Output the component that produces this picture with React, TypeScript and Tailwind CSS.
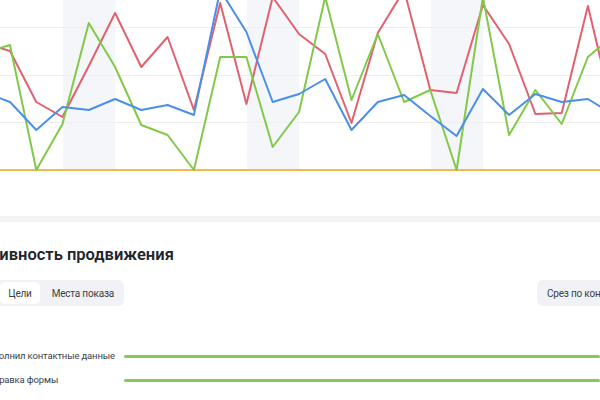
import React from 'react';

const xs = Array.from({ length: 25 }, (_, i) => 10 + 26.27 * (i - 1));

const series = [
  {
    color: '#e0616f',
    data: [43, 51, 102, 117, 66, 13, 67, 37, 110, 3, 104, -3, 34, 54, 123, 33, -10, 90, 93, 5, 44, 114, 113, 6, 116],
  },
  {
    color: '#82c94a',
    data: [53, 45, 170, 124, 23, 67, 125, 135, 170, 57, 57, 147, 112, -3, 100, 34, 102, 90, 170, -3, 135, 90, 124, 57, 35],
  },
  {
    color: '#4a8fe8',
    data: [92, 102, 130, 107, 110, 99, 110, 105, 115, -10, 32, 102, 94, 79, 130, 102, 95, 116, 136, 89, 115, 94, 102, 99, 115],
  },
];

const weekends = [63, 247, 431];
const grid = [27, 75, 122];

function Chart() {
  return (
    <svg width="600" height="172" viewBox="0 0 600 172" className="block">
      {weekends.map((x) => (
        <rect key={x} x={x} y={0} width={52} height={170} fill="#f4f6fa" />
      ))}
      {grid.map((y) => (
        <line key={y} x1={0} x2={600} y1={y + 0.5} y2={y + 0.5} stroke="#efefef" strokeWidth={1} />
      ))}
      <line x1={0} x2={600} y1={170} y2={170} stroke="#f7b84b" strokeWidth={2} />
      {series.map((s) => (
        <polyline
          key={s.color}
          points={s.data.map((y, i) => `${xs[i].toFixed(1)},${y}`).join(' ')}
          fill="none"
          stroke={s.color}
          strokeWidth={2}
          strokeLinejoin="round"
        />
      ))}
    </svg>
  );
}

const goals = ['Заполнил контактные данные', 'Отправка формы'];

export default function App() {
  return (
    <div className="w-[600px] h-[400px] overflow-hidden bg-[#f2f3f5] font-['Roboto','Noto_Sans',sans-serif] text-[#21252d]">
      {/* график */}
      <div className="h-[216px] bg-white">
        <Chart />
        <div className="-ml-[6px] mt-[2px] text-[11px] leading-[14px] text-[#c3c7ce]">ь</div>
      </div>

      {/* эффективность */}
      <div className="mt-[6px] h-[178px] bg-white overflow-hidden pt-[22px]">
        <h2 className="-ml-[62px] whitespace-nowrap text-[16.5px] leading-[22px] font-semibold">Эффективность продвижения</h2>

        <div className="-ml-[58px] mt-[14px] flex w-[745px] items-center">
          <div className="flex h-[26px] rounded-md bg-[#f0f2f5] p-[2px] text-[10px] tracking-[-0.2px] text-[#3a3f4b]">
            <div className="flex w-[56px] items-center justify-center">Обзор</div>
            <div className="flex w-[40px] items-center justify-center rounded-[5px] bg-white">Цели</div>
            <div className="flex w-[82px] items-center justify-end pr-[8px]">Места показа</div>
          </div>
          <div className="ml-auto flex h-[26px] w-[150px] shrink-0 items-center rounded-md bg-[#f0f2f5] px-[10px] text-[10px] tracking-[-0.2px] text-[#3a3f4b] whitespace-nowrap">
            Срез по конверсиям
          </div>
        </div>

        <div className="mt-[38px] flex flex-col">
          {goals.map((g) => (
            <div key={g} className="flex h-[24px] items-center">
              <div className="-ml-[17px] w-[141px] shrink-0 whitespace-nowrap text-[9.5px] tracking-[-0.15px] text-[#3a3f4b]">{g}</div>
              <div className="h-[3px] flex-1 rounded-full bg-[#86c957]" />
            </div>
          ))}
        </div>
      </div>
    </div>
  );
}
